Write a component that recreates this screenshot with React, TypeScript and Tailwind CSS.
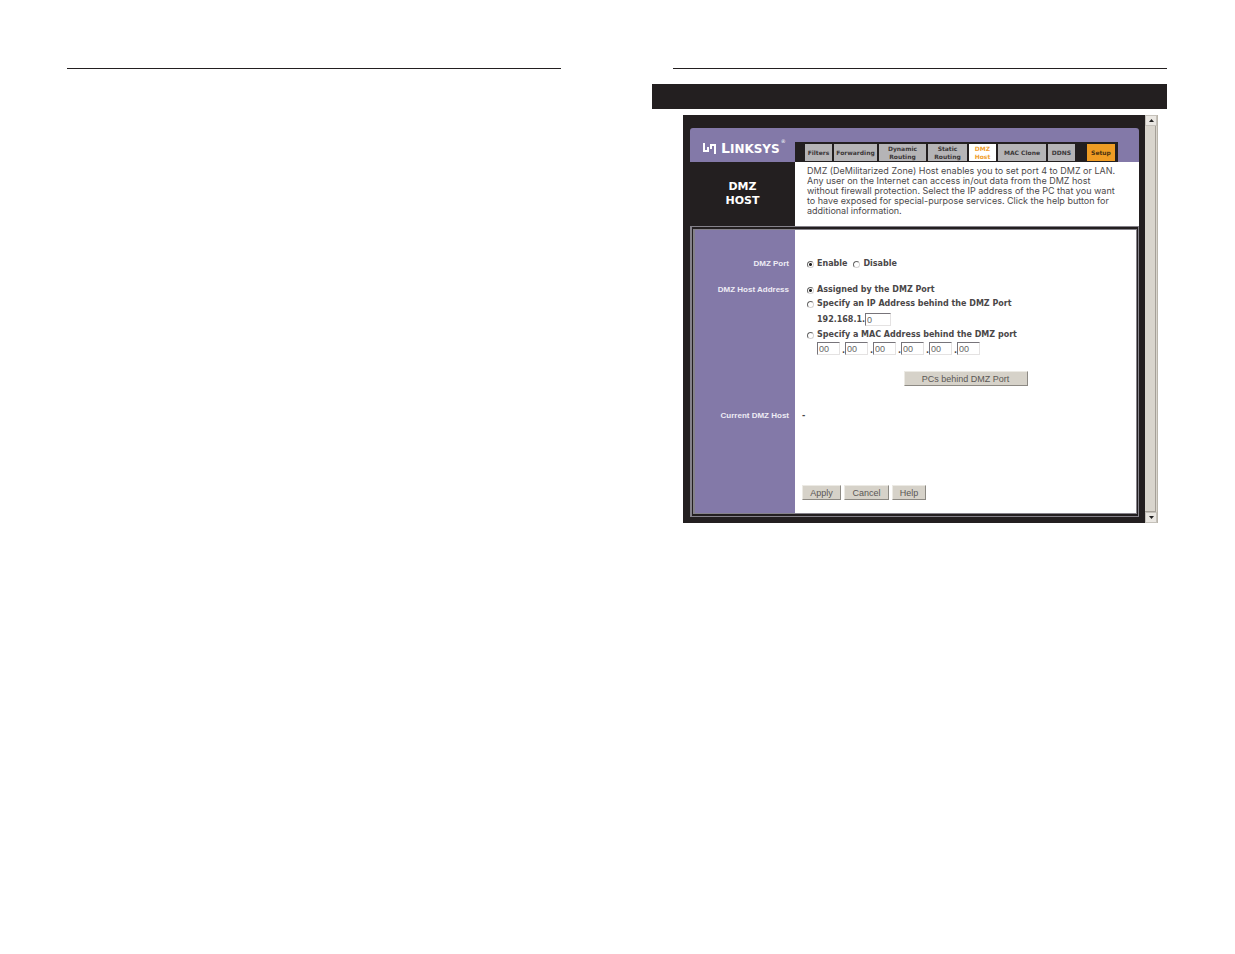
import { useState } from "react";
import clsx from "clsx";

const TABS = [
  { lines: ["Filters"], width: "w-[27px]" },
  { lines: ["Forwarding"], width: "w-[43px]" },
  { lines: ["Dynamic", "Routing"], width: "w-[47px]" },
  { lines: ["Static", "Routing"], width: "w-[39px]" },
  { lines: ["DMZ", "Host"], width: "w-[27px]", active: true },
  { lines: ["MAC Clone"], width: "w-[48px]" },
  { lines: ["DDNS"], width: "w-[27px]" },
];

const MAC_FIELDS = [1, 2, 3, 4, 5, 6];

const BUTTON =
  "h-[15px] border border-t-[#eceae4] border-l-[#eceae4] border-r-[#8c8983] border-b-[#8c8983] bg-[#d6d2c9] font-['Liberation_Sans',sans-serif] text-[9px] leading-[12px] font-normal text-[#5a5755]";
const FIELD =
  "h-[13px] border border-t-[#77747a] border-l-[#77747a] border-r-[#e4e2e2] border-b-[#e4e2e2] bg-white px-px font-['Liberation_Sans',sans-serif] text-[9px] leading-[10px] font-normal text-[#666]";
const SIDE =
  "bg-[#8379a8] pr-[6px] text-right font-['Liberation_Sans',sans-serif] text-[8px] leading-[14px] font-bold text-[#eeecf5]";

function Logo() {
  return (
    <div className="flex w-[105px] shrink-0 items-center gap-1 pt-[6px] pl-[13px] text-white">
      <svg viewBox="0 0 14 11" className="h-[11px] w-[14px]" fill="none" stroke="currentColor" strokeWidth="2">
        <path d="M1 0v8h4V4M8 6V2h4v9" />
      </svg>
      <span className="text-[14px] leading-[14px] font-bold">
        L<span className="text-[12px]">INKSYS</span>
      </span>
      <span className="-ml-[3px] self-start pt-[4px] text-[5px] leading-[6px]">®</span>
    </div>
  );
}

function Radio({ name, label, checked, onChange }: { name: string; label: string; checked: boolean; onChange: () => void }) {
  return (
    <label className="flex items-center gap-[3px]">
      <input
        type="radio"
        name={name}
        checked={checked}
        onChange={onChange}
        className="size-[7px] appearance-none rounded-full border border-t-[#666] border-r-[#d5d3d3] border-b-[#d5d3d3] border-l-[#666] bg-white checked:bg-[radial-gradient(circle,#222_1px,#fff_2px)]"
      />
      {label}
    </label>
  );
}

function ScrollBar() {
  return (
    <div className="flex w-[13px] shrink-0 flex-col border-r border-[#b9b4aa] bg-[#d9d5cd]">
      <button aria-label="Scroll up" className="flex h-[11px] items-center justify-center border border-[#c5c1ba] bg-[#eae7e2]">
        <svg viewBox="0 0 5 3" className="h-[3px] w-[5px]">
          <path d="M0 3 2.500 0 5 3z" fill="#222" />
        </svg>
      </button>
      <div className="mr-px flex-1 border-r border-b border-[#a5a098]" />
      <button aria-label="Scroll down" className="flex h-[11px] items-center justify-center border border-[#c5c1ba] bg-[#eae7e2]">
        <svg viewBox="0 0 5 3" className="h-[3px] w-[5px]">
          <path d="M0 0h5L2.500 3z" fill="#222" />
        </svg>
      </button>
    </div>
  );
}

function Header() {
  return (
    <header>
      <div className="flex h-[34px] rounded-t-[3px] bg-[#8379a8]">
        <Logo />
        <nav className="mt-[14px] flex gap-[2px] bg-[#231f20] pt-[2px] pr-[3px] pb-px pl-[10px] text-[6px] leading-[8px] font-bold">
          {TABS.map((tab) => (
            <a
              key={tab.lines.join(" ")}
              href="#"
              className={clsx(
                "flex flex-col items-center justify-center whitespace-nowrap",
                tab.width,
                tab.active ? "bg-white text-[#f0a030]" : "bg-[#b5b4b6] text-[#3a3738]",
              )}
            >
              {tab.lines.map((line) => (
                <span key={line}>{line}</span>
              ))}
            </a>
          ))}
          <a href="#" className="ml-[10px] flex w-[28px] items-center justify-center bg-[#ef9c24] text-[#4a3210]">
            Setup
          </a>
        </nav>
      </div>
      <div className="flex h-16">
        <h1 className="flex w-[105px] shrink-0 items-center justify-center bg-[#231f20] text-center text-[11px] leading-[14px] font-bold text-white">
          DMZ
          <br />
          HOST
        </h1>
        <p className="flex-1 bg-white pt-[4px] pl-3 font-['Inter',sans-serif] text-[9px] leading-[10px] whitespace-nowrap text-[#4c494a]">
          DMZ (DeMilitarized Zone) Host enables you to set port 4 to DMZ or LAN.
          <br />
          Any user on the Internet can access in/out data from the DMZ host
          <br />
          without firewall protection. Select the IP address of the PC that you want
          <br />
          to have exposed for special-purpose services. Click the help button for
          <br />
          additional information.
        </p>
      </div>
    </header>
  );
}

function DmzForm() {
  const [port, setPort] = useState("enable");
  const [host, setHost] = useState("assigned");

  return (
    <form
      onSubmit={(e) => e.preventDefault()}
      className="grid grid-cols-[100px_1fr] border-4 border-r-[3px] border-l-[5px] border-double border-[#85828a] bg-white bg-clip-padding text-[8px] leading-[14px] font-bold text-[#4a4748]"
    >
      <div className={clsx(SIDE, "pt-[27px]")}>DMZ Port</div>
      <div className="flex gap-[6px] pt-[27px] pb-[6px] pl-3">
        <Radio name="port" label="Enable" checked={port === "enable"} onChange={() => setPort("enable")} />
        <Radio name="port" label="Disable" checked={port === "disable"} onChange={() => setPort("disable")} />
      </div>

      <div className={clsx(SIDE, "pt-[6px]")}>DMZ Host Address</div>
      <div className="pt-[6px] pl-3">
        <Radio name="host" label="Assigned by the DMZ Port" checked={host === "assigned"} onChange={() => setHost("assigned")} />
        <Radio name="host" label="Specify an IP Address behind the DMZ Port" checked={host === "ip"} onChange={() => setHost("ip")} />
        <label className="flex h-[17px] items-center pl-[10px]">
          192.168.1.
          <input defaultValue="0" className={clsx(FIELD, "w-[26px]")} />
        </label>
        <Radio name="host" label="Specify a MAC Address behind the DMZ port" checked={host === "mac"} onChange={() => setHost("mac")} />
        <div className="flex items-end pl-[10px] leading-[8px]">
          {MAC_FIELDS.map((n) => (
            <span key={n} className="flex w-[28px] items-end gap-[2px]">
              <input aria-label={`MAC address part ${n}`} defaultValue="00" className={clsx(FIELD, "w-[23px]")} />
              {n < 6 && "."}
            </span>
          ))}
        </div>
        <div className="flex justify-center pt-4 pr-[12px]">
          <button type="button" className={clsx(BUTTON, "w-[124px]")}>
            PCs behind DMZ Port
          </button>
        </div>
      </div>

      <div className={clsx(SIDE, "pt-[23px]")}>Current DMZ Host</div>
      <div className="pt-[23px] pl-[7px]">-</div>

      <div className="bg-[#8379a8]" />
      <div className="flex gap-[3px] pt-[62px] pb-[13px] pl-[7px]">
        <button type="submit" className={clsx(BUTTON, "w-[39px]")}>
          Apply
        </button>
        <button type="reset" className={clsx(BUTTON, "w-[45px]")}>
          Cancel
        </button>
        <button type="button" className={clsx(BUTTON, "w-[34px]")}>
          Help
        </button>
      </div>
    </form>
  );
}

export default function App() {
  return (
    <main className="grid min-h-screen grid-cols-2 gap-28 bg-white pt-[68px] pr-[68px] pl-[67px] font-['DejaVu_Sans',sans-serif]">
      <section className="border-t border-[#231f20]" />
      <section className="border-t border-[#231f20]">
        <div className="mt-[15px] -ml-[21px] h-[25px] bg-[#231f20]" />
        <div className="mt-[6px] mr-[9px] ml-[10px] flex">
          <div className="min-w-0 flex-1 bg-[#231f20] pt-[13px] pr-[6px] pb-[6px] pl-[7px]">
            <Header />
            <DmzForm />
          </div>
          <ScrollBar />
        </div>
      </section>
    </main>
  );
}
